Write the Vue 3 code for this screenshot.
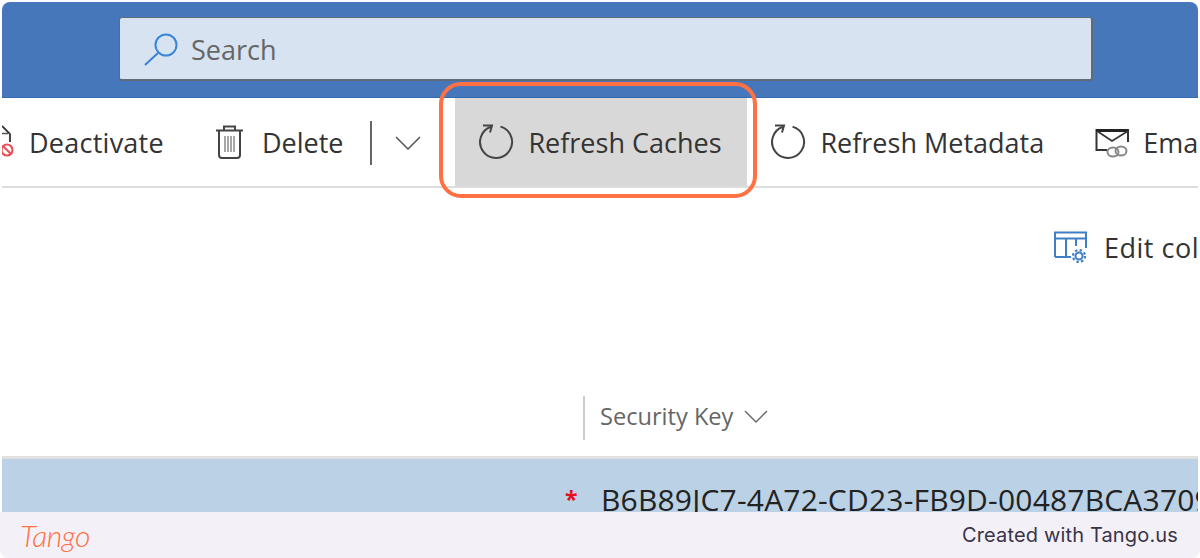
<template>
  <div class="page">
    <div class="shot">
      <header class="topbar">
        <div class="search">
          <svg class="search__icon" width="38" height="38" viewBox="0 0 38 38" fill="none">
            <circle cx="24" cy="15" r="10.5" stroke="#3d86d6" stroke-width="2" />
            <path d="M16 23 L3 35" stroke="#3d7fd0" stroke-width="2" />
          </svg>
          <span class="search__text">Search</span>
        </div>
      </header>

      <div class="toolbar">
        <div class="cmd cmd--deactivate">
          <svg width="14" height="38" viewBox="0 0 14 38" fill="none">
            <path d="M0 10.5 H7" stroke="#555" stroke-width="1.6" />
            <path d="M1 3 L9 11 V19" stroke="#333" stroke-width="1.8" />
            <circle cx="6" cy="27" r="5.5" stroke="#e8525c" stroke-width="2.2" />
            <path d="M2 23 L10 31" stroke="#e8525c" stroke-width="2.2" />
          </svg>
          <span class="cmd__wide">Deactivate</span>
        </div>
        <div class="cmd cmd--delete">
          <svg width="30" height="36" viewBox="0 0 30 36" fill="none" stroke="#444">
            <path d="M2 6.5 H29" stroke-width="2" />
            <path d="M10 6 V2.5 H21 V6" stroke-width="2" />
            <path d="M5 7 V31 Q5 34 8 34 H23 Q26 34 26 31 V7" stroke-width="2" />
            <path d="M11 12 V28 M14 12 V28 M17 12 V28 M20 12 V28" stroke="#777" stroke-width="1.3" />
          </svg>
          <span>Delete</span>
        </div>
        <div class="cmd-sep"></div>
        <svg class="cmd-more" width="26" height="14" viewBox="0 0 26 14" fill="none">
          <path d="M1 1 L13 13 L25 1" stroke="#555" stroke-width="1.5" />
        </svg>
        <div class="cmd cmd--active">
          <svg width="36" height="38" viewBox="0 0 36 38" fill="none" stroke="#444" stroke-width="2">
            <path d="M22.500 3.600 A16 16 0 1 1 13 3.800" />
            <path d="M5 2.500 H14 L12 9.500" />
          </svg>
          <span>Refresh Caches</span>
        </div>
        <div class="cmd cmd--meta">
          <svg width="36" height="38" viewBox="0 0 36 38" fill="none" stroke="#444" stroke-width="2">
            <path d="M22.500 3.600 A16 16 0 1 1 13 3.800" />
            <path d="M5 2.500 H14 L12 9.500" />
          </svg>
          <span>Refresh Metadata</span>
        </div>
        <div class="cmd cmd--email">
          <svg width="34" height="36" viewBox="0 0 34 36" fill="none">
            <path d="M12 26 H1.500 V6 H33 V18" stroke="#333" stroke-width="2" />
            <path d="M1 6.500 H33" stroke="#222" stroke-width="3" />
            <path d="M2 7 L17 17 L33 7" stroke="#333" stroke-width="1.6" />
            <ellipse cx="18" cy="28" rx="5.500" ry="4.500" stroke="#888" stroke-width="2" />
            <ellipse cx="26" cy="27" rx="5.500" ry="4.500" stroke="#888" stroke-width="2" />
          </svg>
          <span>Email a Link</span>
        </div>
      </div>

      <main class="content">
        <div class="edit-row">
          <svg width="34" height="33" viewBox="0 0 34 33" fill="none" stroke="#3f7fc4">
            <path d="M1 26 V1.500 H32 V17" stroke-width="2" />
            <path d="M1 7.500 H32" stroke-width="2" />
            <path d="M1 26 H17" stroke-width="2" />
            <path d="M12 8 V26 M22 8 V15" stroke-width="2" />
            <circle cx="25" cy="25" r="3.500" stroke-width="2" />
            <circle cx="25" cy="25" r="6" stroke-width="2.200" stroke-dasharray="2.400 2.300" />
          </svg>
          <span>Edit columns</span>
        </div>
        <div class="col-head">
          <div class="col-head__sep"></div>
          <span>Security Key</span>
          <svg width="24" height="13" viewBox="0 0 24 13" fill="none">
            <path d="M1 1 L12 12 L23 1" stroke="#666" stroke-width="1.4" />
          </svg>
        </div>
        <div class="row">
          <span class="row__req">*</span>
          <span class="row__key">B6B89JC7-4A72-CD23-FB9D-00487BCA3709</span>
        </div>
      </main>
    </div>

    <footer class="tango">
      <span class="tango__logo">Tango</span>
      <span class="tango__credit">Created with Tango.us</span>
    </footer>

    <div class="callout"></div>
  </div>
</template>

<script setup>
</script>

<style>
html, body { margin: 0; background: #fff; }
</style>

<style scoped>
.page {
  position: relative;
  width: 1200px;
  height: 558px;
  overflow: hidden;
  background: #fff;
  font-family: "Open Sans", "Noto Sans", sans-serif;
  color: #333;
}
.shot {
  height: 510px;
  margin: 2px 2px 0;
  border-radius: 8px 8px 0 0;
  overflow: hidden;
  display: flex;
  flex-direction: column;
  background: #fff;
}

.topbar {
  flex: none;
  height: 96px;
  box-sizing: border-box;
  padding: 15px 105px 0 117px;
  background: #4577ba;
  border-bottom: 1px solid #2f6db0;
}
.search {
  height: 64px;
  box-sizing: border-box;
  display: flex;
  align-items: center;
  background: #d7e3f1;
  border: 1px solid #5f6b78;
  border-bottom-width: 2px;
  border-right-width: 2px;
  border-radius: 3px;
  padding-left: 22px;
}
.search__icon { margin-right: 11px; }
.search__text { font-size: 27px; color: #666; margin-top: 2px; }

.toolbar {
  flex: none;
  height: 90px;
  box-sizing: border-box;
  display: flex;
  align-items: stretch;
  border-bottom: 2px solid #ddd;
  overflow: hidden;
  white-space: nowrap;
  font-size: 27px;
}
.cmd {
  flex: none;
  display: flex;
  align-items: center;
}
.cmd__wide { letter-spacing: 0.25px; }
.cmd--deactivate { gap: 14px; margin-left: -1px; }
.cmd--delete { gap: 18px; margin-left: 50px; }
.cmd-sep {
  flex: none;
  width: 2px;
  height: 44px;
  margin: 23px 0 0 27px;
  background: #666;
}
.cmd-more { flex: none; margin: 38px 0 0 23px; }
.cmd--active {
  width: 292px;
  box-sizing: border-box;
  margin-left: 34px;
  padding-left: 23px;
  gap: 14px;
  background: #d8d8d8;
}
.cmd--meta { gap: 14px; margin-left: 23px; }
.cmd--email { gap: 14px; margin-left: 51px; }

.content {
  flex: 1;
  display: flex;
  flex-direction: column;
  min-height: 0;
  white-space: nowrap;
}
.edit-row {
  flex: none;
  display: flex;
  align-items: center;
  gap: 16px;
  height: 33px;
  margin: 43px 0 0 1052px;
  font-size: 27px;
  letter-spacing: 0.5px;
}
.edit-row svg { flex: none; }
.col-head {
  flex: none;
  display: flex;
  align-items: center;
  height: 44px;
  margin: 132px 0 0 0;
  padding-left: 581px;
  font-size: 23.600px;
  line-height: 38px;
  color: #666;
}
.col-head__sep {
  width: 2px;
  height: 44px;
  margin-right: 15px;
  background: #ccc;
}
.col-head span { margin-top: -4px; }
.col-head svg { margin-left: 11px; margin-top: -4px; }
.row {
  flex: 1;
  min-height: 0;
  display: flex;
  overflow: hidden;
  margin-top: 16px;
  border-top: 3px solid #e0e0e0;
  background: #bbd1e5;
  padding: 20px 0 0 562px;
  font-size: 30px;
  line-height: 41px;
  letter-spacing: 0.2px;
  color: #222;
}
.row__req {
  width: 36px;
  flex: none;
  margin: 5px 0 0 1px;
  font-size: 23px;
  line-height: 30px;
  color: #e8101c;
  font-weight: 700;
}

.tango {
  height: 46px;
  box-sizing: border-box;
  display: flex;
  align-items: center;
  justify-content: space-between;
  padding: 0 22px 0 20px;
  background: #f3f1f7;
  border-radius: 0 0 8px 8px;
}
.tango__logo {
  font-family: Lato, sans-serif;
  font-style: italic;
  font-weight: 300;
  font-size: 30px;
  letter-spacing: -0.4px;
  color: #ff7043;
}
.tango__credit {
  font-family: Inter, sans-serif;
  font-size: 20px;
  letter-spacing: 0.15px;
  color: #3a3348;
}

.callout {
  position: absolute;
  left: 439px;
  top: 82px;
  width: 318px;
  height: 116px;
  box-sizing: border-box;
  border: 4px solid #ff7043;
  border-radius: 22px;
}
</style>
